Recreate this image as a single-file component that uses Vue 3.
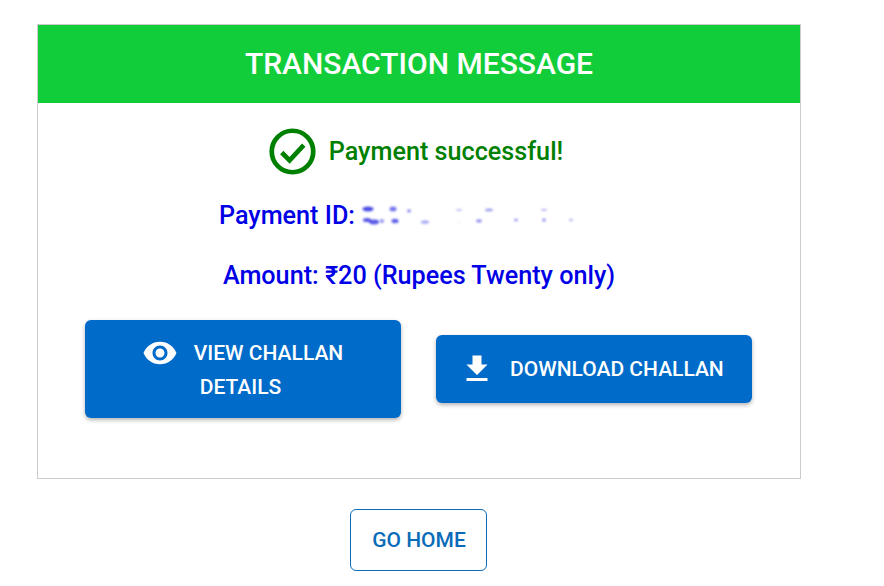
<script setup>
const smudges = [
  [8, 8, 5.5, 2.6, 0.85], [7, 19, 4, 2, 0.8], [14, 21, 5, 2.4, 0.8], [22, 20, 2, 2, 0.5],
  [33, 8, 3.5, 2.5, 0.65], [35, 20, 3.5, 2.2, 0.75], [49, 10, 2, 1.4, 0.55], [65, 21, 4, 1.6, 0.45],
  [99, 9, 3, 1, 0.35], [99, 21, 1, 1, 0.15], [129, 9, 4, 1.2, 0.5], [119, 20, 3, 1.4, 0.55],
  [156, 19, 2, 1.3, 0.5], [184, 9, 3, 1, 0.4], [184, 19, 2, 1.6, 0.5], [211, 19, 2, 1.2, 0.35]
]
</script>

<template>
  <div class="page">
    <section class="card">
      <h1 class="card-title">TRANSACTION MESSAGE</h1>
      <div class="card-body">
        <p class="status">
          <svg class="status-icon" viewBox="0 0 48 48" aria-hidden="true">
            <circle cx="24" cy="24" r="21.2" fill="none" stroke="#008000" stroke-width="4.8" />
            <path d="M13 25l8 8L35.5 17.5" fill="none" stroke="#008000" stroke-width="4.8" />
          </svg>
          <span>Payment successful!</span>
        </p>
        <p class="info payment-id">
          <span>Payment ID:</span>
          <svg class="smudge" viewBox="0 0 222 30" aria-hidden="true">
            <defs>
              <filter id="blur" x="-50%" y="-50%" width="200%" height="200%">
                <feGaussianBlur stdDeviation="0.9" />
              </filter>
            </defs>
            <g filter="url(#blur)" fill="#2a2ae0">
              <ellipse
                v-for="(s, i) in smudges"
                :key="i"
                :cx="s[0]"
                :cy="s[1]"
                :rx="s[2]"
                :ry="s[3]"
                :opacity="s[4]"
              />
            </g>
          </svg>
        </p>
        <p class="info amount">Amount: ₹20 (Rupees Twenty only)</p>
        <div class="actions">
          <button class="btn btn-view" type="button">
            <span class="view-line">
              <svg class="eye" viewBox="0 0 24 24" aria-hidden="true">
                <path fill="#fff" d="M12 4.5C7 4.5 2.73 7.61 1 12c1.73 4.39 6 7.5 11 7.5s9.27-3.11 11-7.5c-1.73-4.39-6-7.5-11-7.5zM12 17c-2.76 0-5-2.24-5-5s2.24-5 5-5 5 2.24 5 5-2.24 5-5 5zm0-8c-1.66 0-3 1.34-3 3s1.34 3 3 3 3-1.34 3-3-1.34-3-3-3z" />
              </svg>
              <span>VIEW CHALLAN</span>
            </span>
            <span class="view-line details">DETAILS</span>
          </button>
          <button class="btn btn-download" type="button">
            <svg class="download" viewBox="0 0 24 24" aria-hidden="true">
              <path fill="#fff" d="M19 9h-4V3H9v6H5l7 7 7-7zM5 18v2h14v-2H5z" />
            </svg>
            <span>DOWNLOAD CHALLAN</span>
          </button>
        </div>
      </div>
    </section>
    <div class="home-row">
      <button class="btn-home" type="button">GO HOME</button>
    </div>
  </div>
</template>

<style scoped>
.page {
  width: 884px;
  height: 586px;
  padding: 24px 0 0 37px;
  box-sizing: border-box;
  overflow: hidden;
  background: #fff;
  font-family: Roboto, "Liberation Sans", sans-serif;
}

.card {
  width: 764px;
  height: 455px;
  box-sizing: border-box;
  border: 1px solid #cccccc;
}

.card-title {
  margin: 0;
  height: 78px;
  line-height: 77px;
  background: #12cd3a;
  color: #fff;
  font-size: 30px;
  font-weight: 500;
  text-align: center;
}

.card-body {
  display: flex;
  flex-direction: column;
}

.status {
  display: flex;
  align-items: center;
  justify-content: center;
  gap: 13px;
  margin: 25px 0 0 -6px;
  height: 46px;
  color: #008000;
  font-size: 25.2px;
  font-weight: 500;
}

.status-icon {
  width: 47px;
  height: 47px;
  flex: none;
}

.info {
  margin: 0;
  color: #0000e6;
  font-size: 25.2px;
  font-weight: 500;
  line-height: 32px;
}

.payment-id {
  display: flex;
  align-items: center;
  margin: 26px 0 0 181px;
}

.smudge {
  width: 222px;
  height: 30px;
  margin-left: 5px;
}

.amount {
  margin-top: 28px;
  text-align: center;
}

.actions {
  display: flex;
  align-items: center;
  margin: 28px 0 0 47px;
  gap: 35px;
}

.btn {
  border: 0;
  border-radius: 6px;
  background: #006bc9;
  color: #fff;
  font-family: inherit;
  font-size: 21px;
  font-weight: 500;
  padding: 0;
  box-shadow: 0 2px 4px rgba(0, 0, 0, 0.3);
}

.btn-view {
  width: 316px;
  height: 98px;
  padding-top: 2px;
  box-sizing: border-box;
  display: flex;
  flex-direction: column;
  align-items: center;
  justify-content: center;
}

.view-line {
  display: flex;
  align-items: center;
  height: 34px;
  gap: 16px;
  margin-left: -1px;
}

.details {
  margin-left: -5px;
}

.eye {
  width: 36px;
  height: 36px;
}

.btn-download {
  width: 316px;
  height: 68px;
  display: flex;
  align-items: center;
  gap: 15px;
  padding-left: 23px;
  box-sizing: border-box;
}

.download {
  width: 36px;
  height: 36px;
}

.home-row {
  width: 762px;
  display: flex;
  justify-content: center;
  margin-top: 30px;
}

.btn-home {
  width: 137px;
  height: 62px;
  padding: 0 0 0 2px;
  border: 1px solid #0a6cb8;
  border-radius: 6px;
  background: #fff;
  color: #0a6cb8;
  font-family: inherit;
  font-size: 21px;
  font-weight: 500;
}
</style>
